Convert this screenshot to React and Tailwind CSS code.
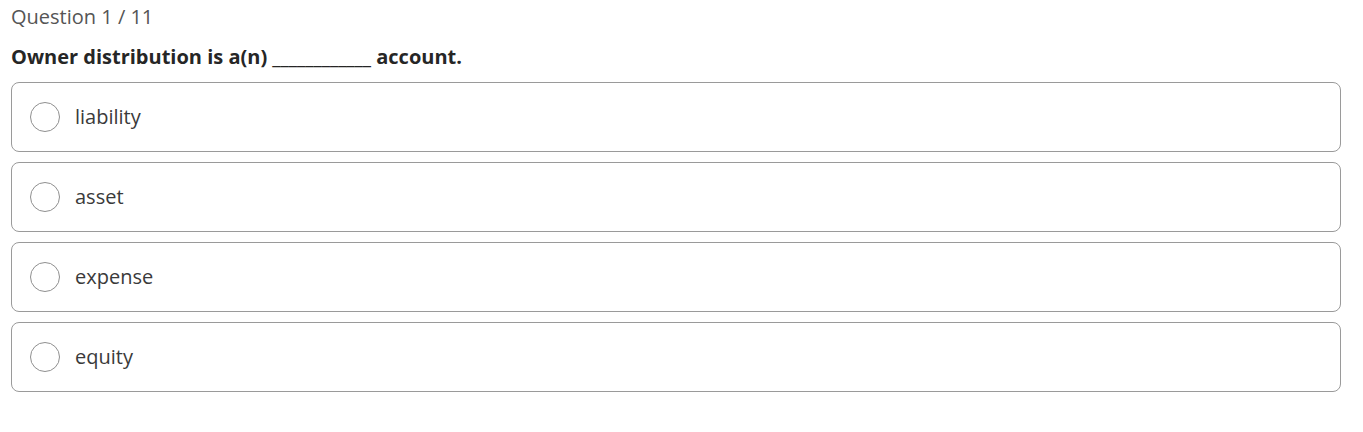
import React from "react";

const options = ["liability", "asset", "expense", "equity"];

export default function App() {
  return (
    <div
      className="bg-white w-[1363px] h-[432px] px-[11px] pt-[4px]"
      style={{ fontFamily: '"Open Sans", sans-serif' }}
    >
      <div className="text-[20px] leading-[26px] text-[#555555]">Question 1 / 11</div>
      <div className="mt-[14px] text-[20px] leading-[26px] font-bold text-[#262626]">
        Owner distribution is a(n) ____________ account.
      </div>
      <div className="mt-[12px] flex flex-col gap-[10px] w-[1330px]">
        {options.map((o) => (
          <div
            key={o}
            className="h-[70px] border border-[#9a9a9a] rounded-[8px] flex items-center pl-[18px]"
          >
            <div className="w-[30px] h-[30px] rounded-full border border-[#8f8f8f]" />
            <span className="ml-[15px] text-[20px] text-[#3a3a3a]">{o}</span>
          </div>
        ))}
      </div>
    </div>
  );
}
